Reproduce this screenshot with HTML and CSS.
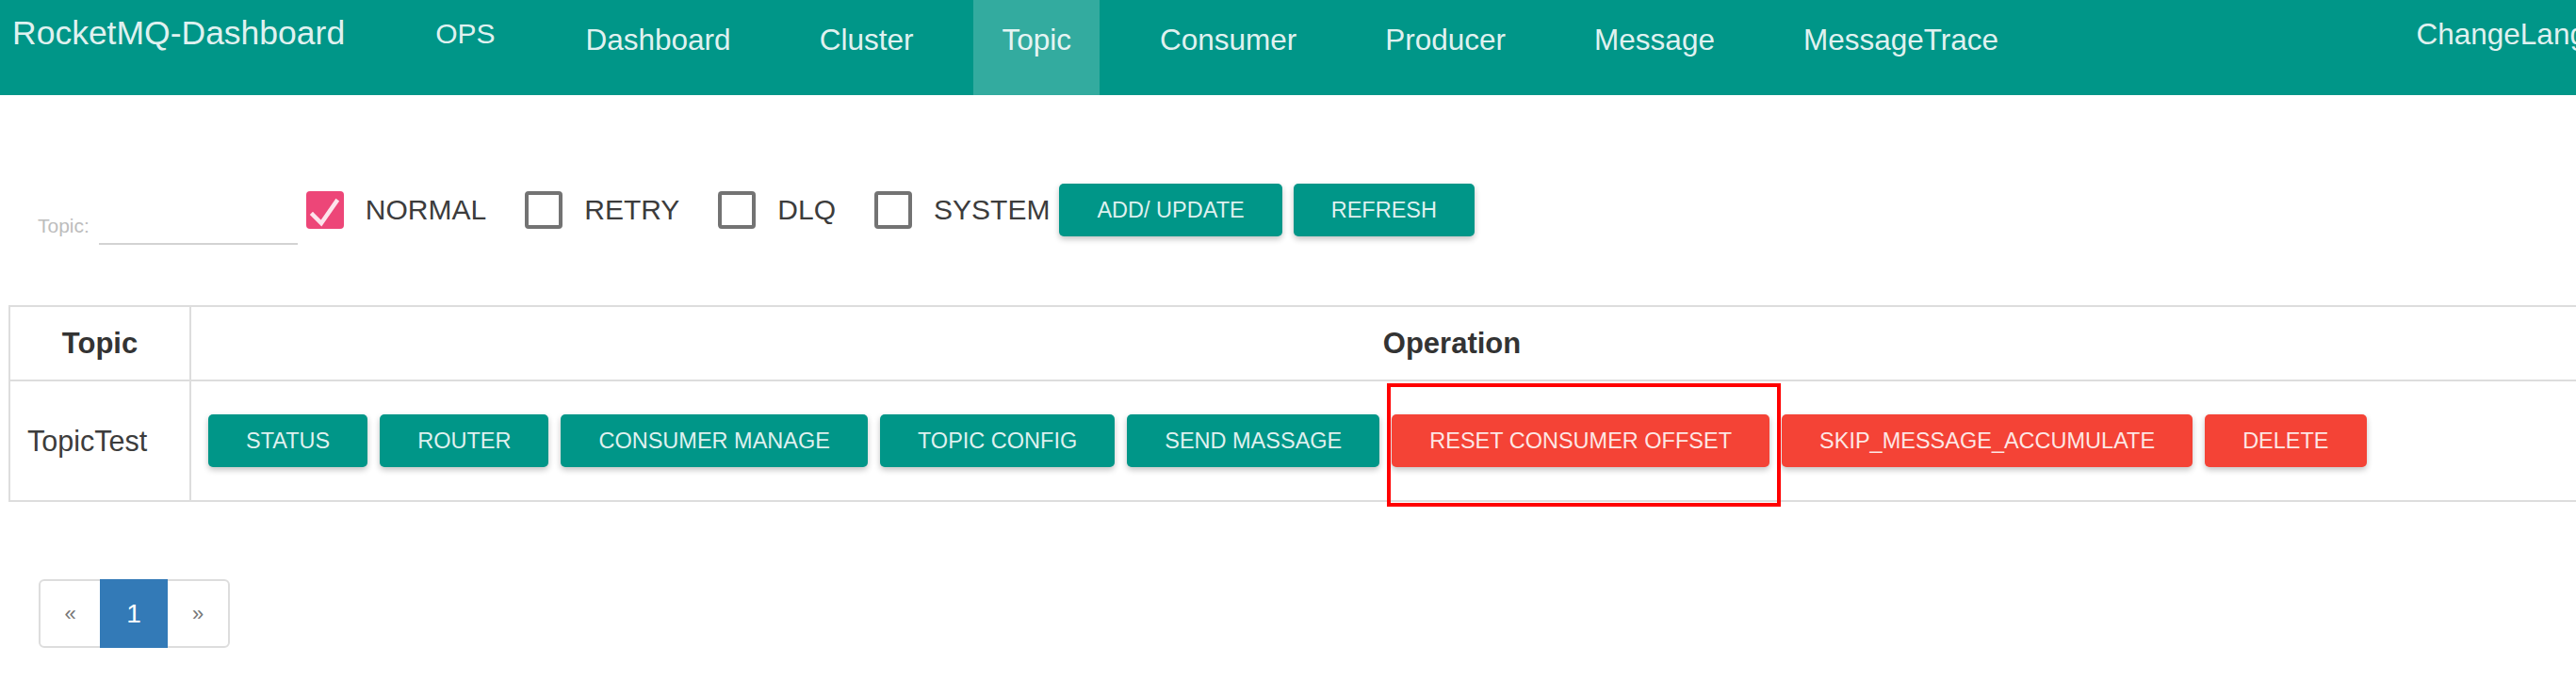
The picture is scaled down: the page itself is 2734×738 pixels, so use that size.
FILE: index.html
```html
<!DOCTYPE html>
<html lang="en">
<head>
<meta charset="utf-8">
<title>RocketMQ-Dashboard</title>
<link rel="stylesheet" href="styles.css">
</head>
<body>
<nav class="navbar">
  <a class="brand">RocketMQ-Dashboard</a>
  <ul class="nav nav-ops">
    <li><a class="nav-link ops">OPS</a></li>
  </ul>
  <ul class="nav nav-main">
    <li><a class="nav-link">Dashboard</a></li>
    <li><a class="nav-link">Cluster</a></li>
    <li><a class="nav-link active">Topic</a></li>
    <li><a class="nav-link">Consumer</a></li>
    <li><a class="nav-link">Producer</a></li>
    <li><a class="nav-link">Message</a></li>
    <li><a class="nav-link">MessageTrace</a></li>
  </ul>
  <ul class="nav nav-right">
    <li><a class="nav-link lang">ChangeLanguage</a></li>
  </ul>
</nav>

<main class="page">
  <div class="filter-row">
    <label class="topic-field">
      <span class="topic-label">Topic:</span>
      <span class="topic-input"></span>
    </label>
    <div class="checks">
      <span class="check"><span class="box checked"><svg viewBox="0 0 40 40" width="40" height="40"><path d="M7 25 L16 34 L32 11" fill="none" stroke="#fde4ec" stroke-width="4.5" stroke-linecap="square"/></svg></span><span class="check-text">NORMAL</span></span>
      <span class="check"><span class="box"></span><span class="check-text">RETRY</span></span>
      <span class="check"><span class="box"></span><span class="check-text">DLQ</span></span>
      <span class="check"><span class="box"></span><span class="check-text">SYSTEM</span></span>
    </div>
    <div class="btn-group">
      <button class="btn teal">ADD/ UPDATE</button>
      <button class="btn teal">REFRESH</button>
    </div>
  </div>

  <div class="grid-table">
    <div class="cell head">Topic</div>
    <div class="cell head">Operation</div>
    <div class="cell body name">TopicTest</div>
    <div class="cell body ops-cell">
      <button class="btn teal">STATUS</button>
      <button class="btn teal">ROUTER</button>
      <button class="btn teal">CONSUMER MANAGE</button>
      <button class="btn teal">TOPIC CONFIG</button>
      <button class="btn teal">SEND MASSAGE</button>
      <span class="highlight"><button class="btn red">RESET CONSUMER OFFSET</button></span>
      <button class="btn red">SKIP_MESSAGE_ACCUMULATE</button>
      <button class="btn red">DELETE</button>
    </div>
  </div>

  <ul class="pagination">
    <li><a class="page-item first">&laquo;</a></li>
    <li><a class="page-item active">1</a></li>
    <li><a class="page-item last">&raquo;</a></li>
  </ul>
</main>
</body>
</html>
```

FILE: styles.css
```css
html {
  overflow: hidden;
}

body {
  margin: 0;
  background: #ffffff;
  font-family: "Liberation Sans", Arial, Helvetica, sans-serif;
  color: #333333;
}

ul {
  list-style: none;
  margin: 0;
  padding: 0;
}

/* ---------- navbar ---------- */
.navbar {
  display: flex;
  align-items: flex-start;
  height: 101px;
  background: #009688;
  padding-left: 13px;
  overflow: hidden;
}

.brand {
  font-size: 35.5px;
  line-height: 40px;
  padding-top: 15px;
  color: rgba(255, 255, 255, 0.9);
  margin-right: 66px;
  white-space: nowrap;
}

.nav {
  display: flex;
}

.nav-ops {
  margin-right: 36px;
}

.nav-main {
  gap: 34px;
}

.nav-right {
  margin-left: auto;
  margin-right: -111px;
}

.nav-link {
  display: block;
  box-sizing: border-box;
  height: 101px;
  padding: 24px 30px 0;
  font-size: 31.5px;
  line-height: 36px;
  color: rgba(255, 255, 255, 0.9);
  white-space: nowrap;
}

.nav-link.ops {
  font-size: 30px;
  line-height: 34px;
  padding-top: 19px;
}

.nav-link.lang {
  padding-top: 18px;
}

.nav-link.active {
  background: rgba(255, 255, 255, 0.2);
}

/* ---------- page ---------- */
.page {
  padding-left: 9px;
}

.filter-row {
  display: flex;
  align-items: center;
  margin-top: 94px;
  margin-left: 31px;
  height: 56px;
}

.topic-field {
  display: flex;
  align-items: flex-end;
  align-self: flex-end;
  margin-bottom: -9px;
  margin-right: 9px;
}

.topic-label {
  font-size: 21px;
  line-height: 24px;
  color: #bdbdbd;
  margin-right: 10px;
  padding-bottom: 8px;
}

.topic-input {
  display: block;
  width: 211px;
  height: 30px;
  border-bottom: 2px solid #d3d3d3;
}

.checks {
  display: flex;
  align-items: center;
  gap: 41px;
  margin-right: 10px;
}

.check {
  display: flex;
  align-items: center;
  gap: 23px;
}

.box {
  display: block;
  box-sizing: border-box;
  width: 40px;
  height: 40px;
  border: 4px solid #737373;
  border-radius: 4px;
}

.box.checked {
  border: none;
  background: #ed4678;
}

.box svg {
  display: block;
}

.check-text {
  font-size: 30px;
  line-height: 36px;
  color: #3c3c3c;
}

.btn-group {
  display: flex;
  gap: 12px;
}

.btn {
  display: inline-block;
  height: 56px;
  padding: 0 40px;
  border: none;
  border-radius: 5px;
  font-family: "Liberation Sans", Arial, Helvetica, sans-serif;
  font-size: 23.5px;
  line-height: 56px;
  color: rgba(255, 255, 255, 0.88);
  box-shadow: 0 3px 6px rgba(0, 0, 0, 0.24);
  white-space: nowrap;
  cursor: pointer;
}

.btn.teal {
  background: #009688;
}

.btn.red {
  background: #f44336;
}

/* ---------- table ---------- */
.grid-table {
  display: grid;
  grid-template-columns: 192px 1fr;
  width: 2870px;
  margin-top: 73px;
  border-top: 2px solid #dddddd;
  border-left: 2px solid #dddddd;
}

.cell {
  box-sizing: border-box;
  border-right: 2px solid #dddddd;
  border-bottom: 2px solid #dddddd;
  display: flex;
  align-items: center;
}

.cell.head {
  height: 79px;
  justify-content: center;
  font-weight: bold;
  font-size: 31px;
  color: #333333;
}

.cell.body {
  height: 128px;
}

.cell.name {
  padding-left: 18px;
  font-size: 30.5px;
  color: #3c3c3c;
}

.ops-cell {
  padding-left: 18px;
  gap: 13px;
}

.highlight {
  position: relative;
  display: block;
}

.highlight .btn {
  display: block;
}

.highlight::after {
  content: "";
  position: absolute;
  top: -33px;
  left: -5px;
  right: -12px;
  bottom: -42px;
  border: 4px solid #ff0000;
  pointer-events: none;
}

/* ---------- pagination ---------- */
.pagination {
  display: flex;
  margin-top: 82px;
  margin-left: 32px;
}

.page-item {
  display: flex;
  align-items: center;
  justify-content: center;
  box-sizing: border-box;
  height: 73px;
  border: 2px solid #dddddd;
  color: #777777;
  font-size: 22px;
  background: #ffffff;
}

.page-item.first {
  width: 67px;
  border-radius: 6px 0 0 6px;
}

.page-item.active {
  position: relative;
  z-index: 1;
  width: 72px;
  margin-left: -2px;
  background: #337ab7;
  border-color: #337ab7;
  color: #ffffff;
  font-size: 28px;
}

.page-item.last {
  width: 68px;
  margin-left: -2px;
  border-radius: 0 6px 6px 0;
}
```
